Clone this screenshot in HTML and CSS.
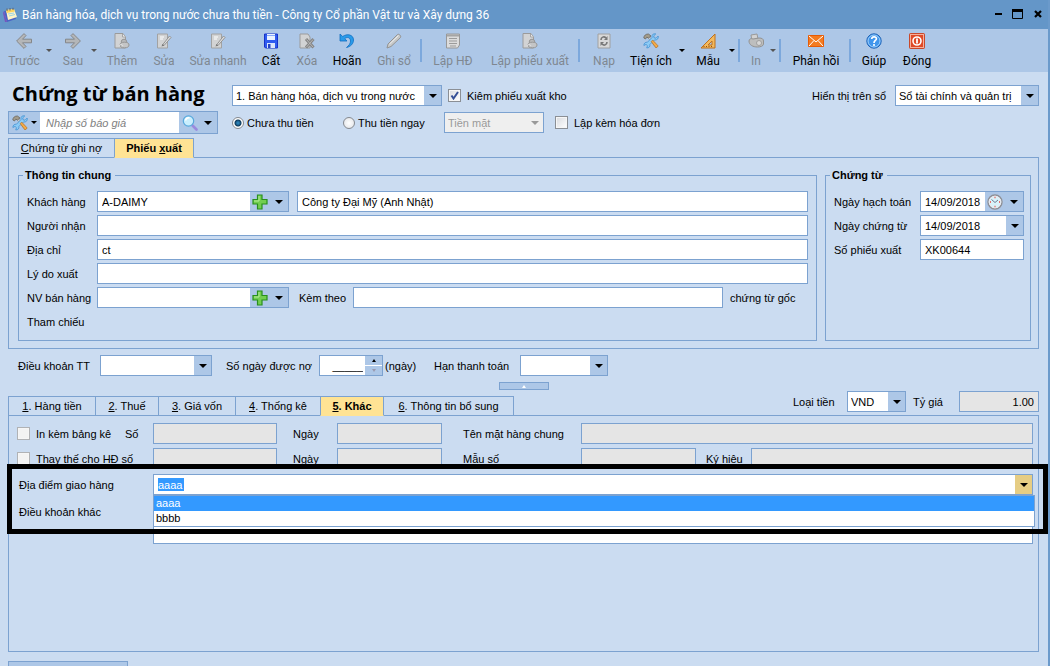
FILE: index.html
```html
<!DOCTYPE html>
<html lang="vi">
<head>
<meta charset="utf-8">
<title>Bán hàng hóa, dịch vụ trong nước chưa thu tiền</title>
<link rel="stylesheet" href="styles.css">
</head>
<body>
<svg class="defs" aria-hidden="true">
  <symbol id="i-add" viewBox="0 0 16 16"><path d="M1 .5h8l2.500 3.500v11H1z" fill="#d2d3d4" stroke="#9b9b9b"/><path d="M8.500 1v3h3" fill="#eee" stroke="#a6a6a6"/><circle cx="10" cy="9" r="2.800" fill="#b9babb" stroke="#969696"/><ellipse cx="10.500" cy="12" rx="4.500" ry="2.800" fill="#c4c5c6" stroke="#969696"/><path d="M5 13c1-2 3-2 4 0" fill="none" stroke="#e6e6e6"/></symbol>
  <symbol id="i-edit" viewBox="0 0 16 16"><path d="M1.500 1h10v14h-10z" fill="#d2d3d4" stroke="#a2a2a2"/><path d="M4 4h4M4 6h3" stroke="#fff"/><path d="M6.500 12 13.500 3l1.500 1.500L8 12.500z" fill="#dedede" stroke="#939393"/><path d="M5.500 13.500 6.500 11l1.800 1.500z" fill="#777"/></symbol>
  <symbol id="i-del" viewBox="0 0 16 16"><path d="M1 1h8l2 3v11H1z" fill="#d2d3d4" stroke="#9b9b9b"/><path d="m7 6 7.500 8.500M14.500 6 7 14.500" stroke="#858585" stroke-width="3"/><path d="m7.500 6.500 6.500 7.500M14 6.500 7.500 14" stroke="#b8b8b8"/></symbol>
  <symbol id="i-tools" viewBox="0 0 16 16"><path d="m4.500 4 1.500-1 8.500 10.500-1.500 1.500z" fill="#cfd3d8" stroke="#8a8d92" stroke-width=".6"/><path d="M15.200 3 13 5.200l-1.900-.4-.4-1.900L12.800.9C10.200.2 8.400 2 9 4.500L4.500 9.200C2.400 8.800.6 10.500.9 12.500L3 11.400l1.500 1.300-.8 2.200c2.100.3 3.700-1.300 3.200-3.400L11.400 7c2.500.5 4.500-1.500 3.800-4z" fill="#8ccbf5" stroke="#3a8bd0" stroke-width=".7"/><path d="m8.200 8.500 1.600-1.300 5.400 5.800-2 2z" fill="#f5ab48" stroke="#b87320" stroke-width=".7"/><path d="M.8 5C.8 2.500 3 .8 5.500 1L8 3 5.500 5 3.800 4.200 2.500 6z" fill="#a39c8c" stroke="#625d54" stroke-width=".7"/></symbol>
  <symbol id="i-plus" viewBox="0 0 16 16"><path d="M5.500 1h4.500v4.500H15V10h-5v5H5.500v-5H1V5.500h4.500z" fill="#72ce50" stroke="#288f1d" stroke-width="1.200"/><path d="M7 2v5H2" fill="none" stroke="#b5eb9a"/></symbol>
</svg>

<header class="titlebar">
  <svg class="icon" viewBox="0 0 16 16"><path d="m2 4 9-1 3 9-9 3z" fill="#4a63c5"/><path d="m4 3 8-1 3 8-9 3z" fill="#fff4c7"/><path d="m4 3 8-1 .8 2.500-8 1.500z" fill="#fcd35d"/><path d="m2 4 3 11H3L1 6z" fill="#7656bd"/><path d="M5 4V1.500M8 3.500V1M11 3V.8" stroke="#59616d"/><path d="m6 7 6-1M7 9l6-1.500" stroke="#9bd5e6"/></svg>
  <span class="caption">Bán hàng hóa, dịch vụ trong nước chưa thu tiền - Công ty Cổ phần Vật tư và Xây dựng 36</span>
  <div class="winbtns">
    <button type="button" aria-label="Thu nhỏ"><svg viewBox="0 0 12 12"><path d="M3 5h7" stroke="#000" stroke-width="2"/></svg></button>
    <button type="button" aria-label="Phóng to"><svg viewBox="0 0 12 12"><path d="M.5 1v8.500h10V1" fill="none" stroke="#000"/><path d="M0 1.500h11" stroke="#000" stroke-width="3"/></svg></button>
    <button type="button" aria-label="Đóng cửa sổ"><svg viewBox="0 0 12 12"><path d="m3 2 6 6M9 2 3 8" stroke="#000" stroke-width="2.200"/></svg></button>
  </div>
</header>

<nav class="toolbar">
  <button type="button" class="tool" disabled><svg class="icon" viewBox="0 0 16 16"><path d="M.6 8 8 .6l2 2L6.500 6.200h9v3.600h-9L10 13.400l-2 2z" fill="#b4b6b8" stroke="#858789"/></svg>Trước</button>
  <button type="button" class="drop" disabled aria-label="Trước: thêm"></button>
  <button type="button" class="tool" disabled><svg class="icon" viewBox="0 0 16 16"><path d="M15.400 8 8 .6l-2 2 3.500 3.600h-9v3.600h9L6 13.400l2 2z" fill="#b4b6b8" stroke="#858789"/></svg>Sau</button>
  <button type="button" class="drop" disabled aria-label="Sau: thêm"></button>
  <button type="button" class="tool" disabled><svg class="icon"><use href="#i-add"/></svg>Thêm</button>
  <button type="button" class="tool" disabled><svg class="icon"><use href="#i-edit"/></svg>Sửa</button>
  <button type="button" class="tool" disabled><svg class="icon"><use href="#i-edit"/></svg>Sửa nhanh</button>
  <button type="button" class="tool"><svg class="icon" viewBox="0 0 16 16"><path d="M1.500 1h13v14h-12l-1-1z" fill="#2f5bf0" stroke="#1732c8"/><path d="M4 1h8v6H4z" fill="#e9f1ff"/><path d="M4 2.500h8" stroke="#86a9fa"/><path d="M4 10h8v5H4z" fill="#dbe6fb"/><path d="M5 11h2.500v4H5z" fill="#2443c4"/></svg>Cất</button>
  <button type="button" class="tool" disabled><svg class="icon"><use href="#i-del"/></svg>Xóa</button>
  <button type="button" class="tool"><svg class="icon" viewBox="0 0 16 16"><path d="M1 1v7h7L5.800 5.700C8 3.500 11.500 4.500 11.500 8c0 2.500-1.500 4.500-4 6.500 4.500-1 7-4 7-7.500C14.500 1.500 8 .3 3.700 3.500z" fill="#299bea" stroke="#126dc0" stroke-width=".8"/></svg>Hoãn</button>
  <button type="button" class="tool" disabled><svg class="icon" viewBox="0 0 16 16"><path d="m2 11 9.500-9.500c1-1 4 1 3 3L5 13.500l-4 1.500z" fill="#c8caca" stroke="#929292"/><path d="m3.500 11 9-8.500" stroke="#eee"/></svg>Ghi sổ</button>
  <span class="sep"></span>
  <button type="button" class="tool" disabled><svg class="icon" viewBox="0 0 16 16"><path d="M1.500 1h13v11l-2 3h-11z" fill="#dcdcdc" stroke="#989898"/><path d="M2 2.500h12" stroke="#a5a5a5" stroke-width="2"/><path d="M4 5.500h8M4 8h8M4 10.500h8M5 13h6" stroke="#9b9b9b"/></svg>Lập HĐ</button>
  <button type="button" class="tool" disabled><svg class="icon"><use href="#i-add"/></svg>Lập phiếu xuất</button>
  <span class="sep"></span>
  <button type="button" class="tool" disabled><svg class="icon" viewBox="0 0 16 16"><path d="M2 1h12v14H2z" fill="#d8d8d8" stroke="#a0a0a0"/><path d="M5 7c0-3 3-4 5-2M11 9c0 3-3 4-5 2" fill="none" stroke="#777" stroke-width="1.600"/><path d="M11.500 3v4H8zM4.500 13V9H8z" fill="#777"/></svg>Nạp</button>
  <button type="button" class="tool"><svg class="icon"><use href="#i-tools"/></svg>Tiện ích</button>
  <button type="button" class="drop" aria-label="Tiện ích: thêm"></button>
  <button type="button" class="tool"><svg class="icon" viewBox="0 0 16 16"><path d="M15 1v14H1z" fill="#f2b95e" stroke="#bf711d"/><path d="M12 8v4H8z" fill="#adc7e7" stroke="#bf711d"/><path d="M4 14v-1M6.500 14v-1M9 14v-1M11.500 14v-1" stroke="#915010"/></svg>Mẫu</button>
  <button type="button" class="drop" aria-label="Mẫu: thêm"></button>
  <span class="sep"></span>
  <button type="button" class="tool" disabled><svg class="icon" viewBox="0 0 16 16"><path d="M3 2 9 1l1 5-6 2z" fill="#d2d2d2" stroke="#999"/><path d="M1 8c0-2 2-3 4-2l6-1c3 0 4.500 1 4.500 3v3c0 2-3 3-6 3C5 14 1 12 1 8z" fill="#bdbebe" stroke="#929292"/><circle cx="11" cy="10" r="2.500" fill="#d8d8d8" stroke="#a0a0a0"/></svg>In</button>
  <button type="button" class="drop" disabled aria-label="In: thêm"></button>
  <span class="sep"></span>
  <button type="button" class="tool"><svg class="icon" viewBox="0 0 16 16"><path d="M.5 2.500h15v11H.5z" fill="#f47b20" stroke="#e65b05"/><path d="m1 3 7 6 7-6M1 13l5-5.500M15 13l-5-5.500" fill="none" stroke="#fff"/></svg>Phản hồi</button>
  <span class="sep"></span>
  <button type="button" class="tool"><svg class="icon" viewBox="0 0 16 16"><circle cx="8" cy="8" r="7.200" fill="#4196ec" stroke="#1e62b5"/><circle cx="8" cy="8" r="6" fill="none" stroke="#9fd0fb"/><path d="M5.700 6c.2-3 5-2.700 4.700 0C10.200 7.600 8 7.500 8 10" fill="none" stroke="#fff" stroke-width="1.700"/><circle cx="8" cy="12" r="1.100" fill="#fff"/></svg>Giúp</button>
  <button type="button" class="tool"><svg class="icon" viewBox="0 0 16 16"><rect x=".5" y=".5" width="15" height="15" rx="1" fill="#df4a26" stroke="#c9482a"/><rect x="1.500" y="1.500" width="13" height="13" fill="none" stroke="#f5b09c"/><circle cx="8" cy="8" r="4" fill="none" stroke="#fff" stroke-width="1.600"/><path d="M8 5.500v5" stroke="#fff" stroke-width="1.800"/></svg>Đóng</button>
</nav>

<main class="content">
  <section class="head">
    <h1>Chứng từ bán hàng</h1>
    <div class="line">
      <span class="combo kind"><select aria-label="Loại chứng từ"><option>1. Bán hàng hóa, dịch vụ trong nước</option></select></span>
      <label class="check"><input type="checkbox" checked>Kiêm phiếu xuất kho</label>
      <label class="push" for="book">Hiển thị trên sổ</label>
      <span class="combo book"><select id="book"><option>Sổ tài chính và quản trị</option></select></span>
    </div>
    <div class="search">
      <button type="button" class="search-tool" aria-label="Tùy chọn"><svg class="icon"><use href="#i-tools"/></svg><i class="tri small"></i></button>
      <input type="text" placeholder="Nhập số báo giá" aria-label="Nhập số báo giá">
      <button type="button" class="search-go" aria-label="Tìm"><svg class="icon" viewBox="0 0 16 16"><path d="m10.500 10.500 4 4" stroke="#9a8ade" stroke-width="2.600" stroke-linecap="round"/><circle cx="6.500" cy="6" r="5.200" fill="#c9eefd" stroke="#58a8dc" stroke-width="1.200"/><path d="M3.500 5.500c.5-2 2-3 4-2.500" fill="none" stroke="#fff" stroke-width="1.500"/></svg><i class="tri"></i></button>
    </div>
    <div class="line">
      <label class="radio unpaid"><input type="radio" name="pay" checked>Chưa thu tiền</label>
      <label class="radio paid"><input type="radio" name="pay">Thu tiền ngay</label>
      <span class="combo cash off"><select disabled aria-label="Hình thức"><option>Tiền mặt</option></select></span>
      <label class="check invoice"><input type="checkbox">Lập kèm hóa đơn</label>
    </div>
  </section>

  <div class="tabs top" role="tablist">
    <button type="button" role="tab"><span><u>C</u>hứng từ ghi nợ</span></button>
    <button type="button" role="tab" class="active" aria-selected="true"><span>Phiếu <u>x</u>uất</span></button>
  </div>
  <section class="panel voucher">
    <fieldset class="general">
      <legend>Thông tin chung</legend>
      <div class="row">
        <label for="cust">Khách hàng</label>
        <span class="field customer"><input id="cust" type="text" value="A-DAIMY"><button type="button" class="btn-plus" aria-label="Thêm khách hàng"><svg class="icon"><use href="#i-plus"/></svg></button><button type="button" class="btn-tri" aria-label="Chọn"><i class="tri"></i></button></span>
        <input class="box gap" type="text" value="Công ty Đại Mỹ (Anh Nhật)" aria-label="Tên khách hàng">
      </div>
      <div class="row"><label for="recv">Người nhận</label><input class="box" id="recv" type="text"></div>
      <div class="row"><label for="addr">Địa chỉ</label><input class="box" id="addr" type="text" value="ct"></div>
      <div class="row"><label for="why">Lý do xuất</label><input class="box" id="why" type="text"></div>
      <div class="row">
        <label for="staff">NV bán hàng</label>
        <span class="field customer"><input id="staff" type="text"><button type="button" class="btn-plus" aria-label="Thêm nhân viên"><svg class="icon"><use href="#i-plus"/></svg></button><button type="button" class="btn-tri" aria-label="Chọn"><i class="tri"></i></button></span>
        <label class="attach" for="att">Kèm theo</label>
        <input class="box" id="att" type="text">
        <span class="origin">chứng từ gốc</span>
      </div>
      <div class="row"><span>Tham chiếu</span></div>
    </fieldset>
    <fieldset class="docs">
      <legend>Chứng từ</legend>
      <div class="row"><label for="d1">Ngày hạch toán</label><span class="field"><input id="d1" type="text" value="14/09/2018"><button type="button" class="btn-plus" aria-label="Giờ"><svg class="icon" viewBox="0 0 16 16"><circle cx="8" cy="8" r="7" fill="#d9f2fa" stroke="#8e8f96" stroke-width="1.400"/><circle cx="8" cy="8" r="5.800" fill="none" stroke="#e9e9ee"/><path d="m4.500 5.500 3.500 3 3-2.500" fill="none" stroke="#6d7f96"/><path d="M7.500 3.500h1M7.500 12.500h1M3 8h1M12 8h1" stroke="#f0463c" stroke-width="1.400"/></svg></button><button type="button" class="btn-tri" aria-label="Chọn ngày"><i class="tri"></i></button></span></div>
      <div class="row"><label for="d2">Ngày chứng từ</label><span class="field"><input id="d2" type="text" value="14/09/2018"><button type="button" class="btn-tri slim" aria-label="Chọn ngày"><i class="tri"></i></button></span></div>
      <div class="row"><label for="no">Số phiếu xuất</label><input class="box" id="no" type="text" value="XK00644"></div>
    </fieldset>
  </section>

  <section class="terms">
    <label class="t1" for="term">Điều khoản TT</label>
    <span class="combo term"><select id="term"><option></option></select></span>
    <label class="t2" for="days">Số ngày được nợ</label>
    <span class="field spin"><input id="days" type="text" value="_____"><span class="steps"><button type="button" aria-label="Tăng"><i class="tri tiny up"></i></button><button type="button" aria-label="Giảm"><i class="tri tiny dim"></i></button></span></span>
    <span class="t3">(ngày)</span>
    <label class="t4" for="due">Hạn thanh toán</label>
    <span class="combo due"><select id="due"><option></option></select></span>
  </section>
  <button type="button" class="splitter" aria-label="Thu gọn"><i class="tri tiny up white"></i></button>

  <div class="tabrow">
    <div class="tabs detail" role="tablist">
      <button type="button" role="tab"><span><u>1</u>. Hàng tiền</span></button>
      <button type="button" role="tab"><span><u>2</u>. Thuế</span></button>
      <button type="button" role="tab"><span><u>3</u>. Giá vốn</span></button>
      <button type="button" role="tab"><span><u>4</u>. Thống kê</span></button>
      <button type="button" role="tab" class="active" aria-selected="true"><span><u>5</u>. Khác</span></button>
      <button type="button" role="tab"><span><u>6</u>. Thông tin bổ sung</span></button>
    </div>
    <div class="money">
      <label for="cur">Loại tiền</label>
      <span class="combo cur"><select id="cur"><option>VND</option></select></span>
      <label class="rate" for="rate">Tỷ giá</label>
      <input class="box off right" id="rate" type="text" value="1.00" readonly>
    </div>
  </div>
  <section class="panel other">
    <div class="grid">
      <div class="pair"><label class="check pale"><input type="checkbox">In kèm bảng kê</label><label for="n1">Số</label></div>
      <input class="box off" id="n1" type="text" readonly>
      <label class="day" for="n2">Ngày</label>
      <input class="box off" id="n2" type="text" readonly>
      <label class="name" for="n3">Tên mặt hàng chung</label>
      <input class="box off" id="n3" type="text" readonly>

      <label class="check pale"><input type="checkbox">Thay thế cho HĐ số</label>
      <input class="box off" type="text" readonly aria-label="Hóa đơn số">
      <label class="day" for="m2">Ngày</label>
      <input class="box off" id="m2" type="text" readonly>
      <label class="name" for="m3">Mẫu số</label>
      <div class="pair"><input class="box off form-no" id="m3" type="text" readonly><label class="sign" for="m4">Ký hiệu</label><input class="box off" id="m4" type="text" readonly></div>
    </div>
    <div class="delivery">
      <label for="place">Địa điểm giao hàng</label>
      <div class="field place"><input id="place" type="text" value="aaaa" role="combobox" aria-expanded="true"><button type="button" class="btn-tri hot" aria-label="Mở danh sách"><i class="tri"></i></button>
        <ul class="menu" role="listbox"><li class="on" role="option" aria-selected="true">aaaa</li><li role="option">bbbb</li></ul>
      </div>
      <label for="more">Điều khoản khác</label>
      <textarea id="more" class="box"></textarea>
    </div>
  </section>
  <footer class="foot"><div class="foot-tab"></div></footer>
</main>
</body>
</html>
```
FILE: styles.css
```css
* { box-sizing: border-box; }

:root {
  --bg: #cbdcf1;
  --bar: #adc7e7;
  --line: #7ca2d0;
  --grey: #e5e5e5;
}

body {
  margin: 0;
  min-height: 100vh;
  display: flex;
  flex-direction: column;
  background: var(--bg);
  border-right: 2px solid #6b9acb;
  color: #000;
  font: 11px/14px "Liberation Sans", Arial, sans-serif;
}

button, input, select, textarea {
  margin: 0;
  padding: 0;
  border: 0;
  border-radius: 0;
  background: none;
  color: inherit;
  font: inherit;
}

label, span { white-space: nowrap; }
.defs { position: absolute; width: 0; height: 0; }
.icon { width: 16px; height: 16px; flex: none; display: block; }

.tri {
  flex: none;
  width: 0;
  height: 0;
  border: 4px solid transparent;
  border-top-color: #000;
  border-bottom: 0;
}
.tri.small { border-width: 3px 3px 0; }
.tri.tiny { border-width: 3px 2px 0; }
.tri.up { border-width: 0 2px 3px; border-bottom: 3px solid #000; }
.tri.white { border-bottom-color: #fff; }
.tri.dim { border-top-color: #9a9ab0; }

/* Title bar */
.titlebar {
  display: flex;
  align-items: center;
  height: 29px;
  padding: 0 4px 0 2px;
  background: #6496c8;
  color: #fff;
  font: 12px/16px Roboto, "Noto Sans", sans-serif;
}
.caption { flex: 1; padding-left: 4px; }
.winbtns { display: flex; gap: 8px; }
.winbtns button { width: 12px; height: 12px; }
.winbtns svg { display: block; }

/* Toolbar */
.toolbar {
  display: grid;
  grid-template-columns: 36px 14px 34px 8px 48px 36px 72px 34px 38px 42px 52px 2px 62px 92px 6px 44px 50px 12px 40px 8px 6px 28px 6px 8px 64px 4px 44px 42px;
  height: 43px;
  padding-left: 6px;
  background: var(--bar);
  font: 12px/16px Roboto, "Noto Sans", sans-serif;
}
.tool {
  display: flex;
  flex-direction: column;
  align-items: center;
  gap: 4px;
  padding-top: 4px;
  white-space: nowrap;
  min-width: 0;
}
.tool:disabled { color: #7f8791; }
.drop { display: flex; justify-content: center; align-items: center; }
.drop::after { content: ""; border: 3px solid transparent; border-top-color: #000; border-bottom: 0; }
.drop:disabled::after { border-top-color: #555; }
.sep { width: 2px; height: 23px; justify-self: center; align-self: center; background: #7ca8dc; }

/* Page body */
.content {
  flex: 1;
  display: flex;
  flex-direction: column;
  padding: 12px 9px 0 8px;
}
.head {
  display: grid;
  grid-template-columns: 210px 1fr;
  grid-template-rows: 23px 23px;
  gap: 4px 14px;
}
h1 { margin: 0; padding-left: 4px; font: bold 20px/20px "Open Sans", "Noto Sans", sans-serif; white-space: nowrap; }
.line { display: flex; align-items: center; }
.push { margin-left: auto; padding-right: 9px; }

.combo { position: relative; display: block; height: 21px; flex: none; }
.combo select {
  display: block;
  width: 100%;
  height: 100%;
  padding: 0 18px 0 3px;
  appearance: none;
  border: 1px solid var(--line);
  background: linear-gradient(to left, var(--bar) 17px, #fff 17px);
}
.combo::after {
  content: "";
  position: absolute;
  top: 9px;
  right: 5px;
  border: 4px solid transparent;
  border-top-color: #000;
  border-bottom: 0;
  pointer-events: none;
}
.combo.off select { background: #efefef; color: #9a9a9a; opacity: 1; }
.combo.off::after { border-top-color: #999; }
.kind { width: 210px; }
.book { width: 144px; }
.cash { width: 100px; }
.term { width: 112px; }
.due { width: 88px; }
.cur { width: 59px; }

.check, .radio { display: flex; align-items: center; gap: 6px; }
.line .check { margin-left: 6px; }
.check input {
  appearance: none;
  flex: none;
  width: 13px;
  height: 13px;
  border: 1px solid #8b8f95;
  background: linear-gradient(135deg, #d8dade, #fff);
  box-shadow: inset 0 0 0 1px #f6f6f6;
}
.check input:checked {
  background: url("data:image/svg+xml,%3Csvg xmlns='http://www.w3.org/2000/svg' viewBox='0 0 11 11'%3E%3Cpath d='M2.500 5.500 4.500 8.500 9 2' fill='none' stroke='%23354f96' stroke-width='2'/%3E%3C/svg%3E"), linear-gradient(135deg, #d8dade, #fff);
}
.check.pale input { border-color: #b0b2b5; background: #f3f3f3; }
.radio { gap: 3px; }
.radio input {
  appearance: none;
  flex: none;
  width: 12px;
  height: 12px;
  border: 1px solid #85898f;
  border-radius: 50%;
  background: radial-gradient(#fff, #dfe1e5);
}
.radio input:checked { background: radial-gradient(#2a7fb4 0 1px, #0d3a5c 3px, #fff 4px); }
.unpaid { width: 111px; }
.paid { width: 101px; }
.line .invoice { margin-left: 11px; }

.search { display: flex; border: 1px solid var(--line); background: var(--bar); }
.search input { flex: 1; min-width: 0; padding-left: 6px; background: #fff; font-style: italic; }
.search input::placeholder { color: #808080; }
.search-tool { width: 31px; padding-left: 3px; display: flex; align-items: center; gap: 3px; }
.search-go { width: 38px; padding-left: 3px; display: flex; align-items: center; gap: 6px; }

/* Tabs and panels */
.tabs { display: flex; }
.tabs button {
  height: 20px;
  margin-left: -1px;
  border: 1px solid var(--line);
  text-align: center;
}
.tabs button:first-child { margin-left: 0; }
.tabs .active { background: #ffe394; border-bottom-color: #ffe394; font-weight: bold; position: relative; }
.tabs.top { margin-top: 4px; }
.top button { width: 107px; }
.top .active { width: 80px; }
.panel { border: 1px solid var(--line); margin-top: -1px; }

.voucher { display: flex; gap: 8px; padding: 10px 7px 7px 9px; }
fieldset {
  display: flex;
  flex-direction: column;
  gap: 3px;
  min-width: 0;
  margin: 0;
  padding: 9px 8px 8px;
  border: 1px solid var(--line);
}
legend { margin-left: -4px; padding: 0 4px 0 2px; font-weight: bold; }
.general { flex: 1; }
.docs { width: 206px; padding-right: 6px; }
.row { display: flex; align-items: center; height: 21px; }
.row > :first-child { width: 70px; flex: none; }
.docs .row > :first-child { width: 86px; }

.box, .field { height: 21px; border: 1px solid var(--line); background: #fff; }
.box { flex: 1; min-width: 0; padding: 0 4px; }
.gap { margin-left: 8px; }
.box.off { background: var(--grey); }
.right { text-align: right; }
.field { display: flex; flex: 1; min-width: 0; }
.field input { flex: 1; min-width: 0; padding-left: 4px; }
.field.customer { flex: none; width: 192px; }
.btn-plus, .btn-tri { display: flex; align-items: center; justify-content: center; flex: none; background: var(--bar); }
.btn-plus { width: 19px; }
.btn-tri { width: 19px; }
.btn-tri.slim { width: 17px; }
.attach { padding-left: 10px; width: 64px; }
.origin { padding-left: 7px; width: 85px; }

/* Payment terms */
.terms { display: flex; align-items: center; padding-left: 10px; margin-top: 6px; }
.t1 { width: 82px; }
.t2 { width: 107px; padding-left: 14px; }
.t3 { width: 40px; padding-left: 2px; }
.t4 { width: 97px; padding-left: 11px; }
.field.spin { flex: none; width: 64px; }
.spin input { text-align: right; padding-right: 2px; }
.steps { width: 17px; display: flex; flex-direction: column; gap: 1px; }
.steps button { flex: 1; display: flex; align-items: center; justify-content: center; background: var(--bar); }
.splitter {
  align-self: center;
  display: flex;
  justify-content: center;
  align-items: center;
  width: 50px;
  height: 8px;
  margin-top: 6px;
  border: 1px solid var(--line);
  background: var(--bar);
}

.tabrow { display: flex; justify-content: space-between; margin-top: 1px; }
.tabs.detail { align-items: flex-end; }
.detail button:nth-child(1) { width: 88px; }
.detail button:nth-child(2) { width: 64px; }
.detail button:nth-child(3) { width: 78px; }
.detail button:nth-child(4) { width: 86px; }
.detail button:nth-child(5) { width: 64px; }
.detail button:nth-child(6) { width: 131px; }
.money { display: flex; align-items: center; gap: 7px; margin-bottom: 4px; }
.money label:first-child { width: 47px; }
.rate { width: 39px; }
.money .box { flex: none; width: 80px; }

.other { flex: 1; padding: 7px 5px 7px 8px; }
.grid { display: grid; grid-template-columns: 136px 124px 60px 105px 139px 1fr; gap: 4px 0; align-items: center; }
.pair { display: flex; align-items: center; min-width: 0; }
.pair .check { width: 108px; }
.day { padding-left: 16px; }
.name { padding-left: 21px; }
.form-no { flex: none; width: 115px; }
.sign { width: 55px; padding-left: 10px; }

.delivery {
  position: relative;
  display: grid;
  grid-template-columns: 134px 1fr;
  grid-template-rows: 21px 43px;
  gap: 6px 0;
  margin-top: 5px;
  padding-left: 2px;
}
.delivery label { line-height: 22px; }
/* Highlight frame around the delivery fields */
.delivery::after {
  content: "";
  position: absolute;
  inset: -10px -15px 10px -10px;
  border: 5px solid #000;
  pointer-events: none;
}
.place { position: relative; }
.place input { flex: none; width: 26px; height: 13px; margin: 3px auto 3px 4px; padding: 0; background: #3399ff; color: #fff; }
.btn-tri.hot { width: 17px; background: #e6cd84; }
.menu {
  position: absolute;
  top: 20px;
  left: -1px;
  right: -3px;
  margin: 0;
  padding: 0;
  list-style: none;
  border: 1px solid var(--line);
  background: #fff;
  line-height: 15px;
}
.menu li { padding-left: 2px; }
.menu .on { background: #3399ff; color: #fff; }
textarea.box { height: 43px; resize: none; }

.foot { padding-top: 9px; }
.foot-tab { width: 120px; height: 5px; border: 1px solid var(--line); border-bottom: 0; background: var(--bar); }
```
